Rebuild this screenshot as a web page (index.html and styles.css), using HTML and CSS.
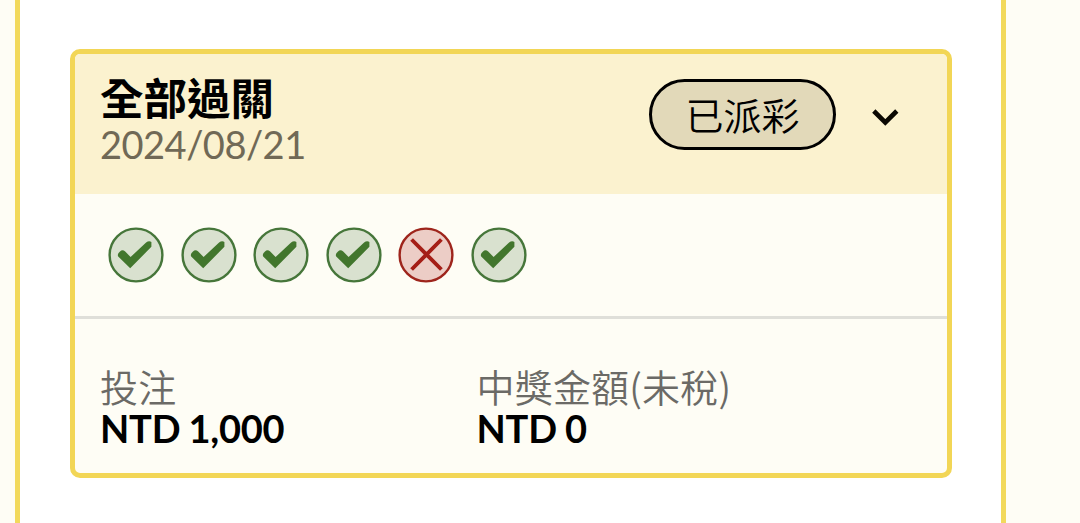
FILE: index.html
```html
<!DOCTYPE html>
<html lang="zh-Hant">
<head>
<meta charset="utf-8">
<title>全部過關</title>
<link rel="stylesheet" href="styles.css">
</head>
<body>
<svg class="defs" width="0" height="0">
  <symbol id="hit" viewBox="0 0 56 56">
    <circle cx="28" cy="28" r="26.4" fill="#d9e1cf" stroke="#46763a" stroke-width="2.4"/>
    <path d="M12 24.4Q14.6 22.2 17.2 24.6L22.6 30L38.1 15.5Q41.1 13.2 43.4 15V19.8L22.2 41.3L10.2 29.4Q8.9 26.8 12 24.4Z" fill="#42762d"/>
  </symbol>
  <symbol id="miss" viewBox="0 0 56 56">
    <circle cx="28" cy="28" r="26.4" fill="#eccdc6" stroke="#9e251c" stroke-width="2.4"/>
    <path d="M13.6 12.5L43.4 42.5M43.4 12.5L13.6 42.5" fill="none" stroke="#a51e17" stroke-width="3.9"/>
  </symbol>
</svg>
<main class="panel">
  <section class="card">
    <header class="card-head">
      <div class="heading">
        <h1 class="title">全部過關</h1>
        <div class="date">2024/08/21</div>
      </div>
      <div class="status">已派彩</div>
      <svg class="chevron" viewBox="0 0 28 20"><path d="M2.8 3L14.3 14.5L25.8 3" fill="none" stroke="#0b0903" stroke-width="4.6"/></svg>
    </header>
    <div class="results">
      <svg class="mark"><use href="#hit"/></svg>
      <svg class="mark"><use href="#hit"/></svg>
      <svg class="mark"><use href="#hit"/></svg>
      <svg class="mark"><use href="#hit"/></svg>
      <svg class="mark"><use href="#miss"/></svg>
      <svg class="mark"><use href="#hit"/></svg>
    </div>
    <div class="amounts">
      <div class="amount">
        <div class="label">投注</div>
        <div class="value">NTD 1,000</div>
      </div>
      <div class="amount">
        <div class="label">中獎金額(未稅)</div>
        <div class="value">NTD 0</div>
      </div>
    </div>
  </section>
</main>
</body>
</html>
```
FILE: styles.css
```css
* { box-sizing: border-box; }
body {
  margin: 0;
  height: 523px;
  overflow: hidden;
  background: #fefdf5;
  color: #000;
  font-family: Lato, "Noto Sans CJK TC", sans-serif;
}
.defs { display: block; }
.panel {
  width: 991px;
  height: 523px;
  margin-left: 15px;
  padding: 49px 49px 0 50px;
  background: #fff;
  border: solid #f2d95c;
  border-width: 0 5px;
}
.card {
  width: 882px;
  height: 429px;
  border: 5px solid #f2d656;
  border-radius: 10px;
  background: #fefdf5;
  overflow: hidden;
}
.card-head {
  display: flex;
  height: 140px;
  padding: 25px 48px 0 25px;
  background: #fbf2cf;
}
.heading { flex: 1; }
.title {
  margin: -3px 0 0;
  font-size: 43.5px;
  font-weight: 700;
  line-height: 45px;
}
.date {
  font-size: 38px;
  line-height: 46px;
  letter-spacing: -0.5px;
  color: #706956;
}
.status {
  width: 187px;
  height: 71px;
  border: 3px solid #000;
  border-radius: 36px;
  background: #e2d9b9;
  font-size: 38px;
  font-weight: 350;
  line-height: 66px;
  text-align: center;
}
.chevron {
  width: 28px;
  height: 20px;
  margin: 29px 0 0 35px;
}
.results {
  display: flex;
  gap: 16.5px;
  height: 125px;
  padding: 33px 0 0 33px;
  border-bottom: 3px solid #dfdfd9;
}
.mark { width: 56px; height: 56px; }
.amounts {
  display: grid;
  grid-template-columns: 376.5px 1fr;
  padding: 46px 0 0 25px;
}
.label {
  font-family: "Noto Sans CJK TC", sans-serif;
  font-size: 38px;
  font-weight: 350;
  line-height: 42px;
  letter-spacing: 0.2px;
  color: #6b6a66;
}
.value {
  font-size: 38px;
  font-weight: 700;
  line-height: 42px;
  letter-spacing: -0.2px;
  word-spacing: -1px;
}
```
